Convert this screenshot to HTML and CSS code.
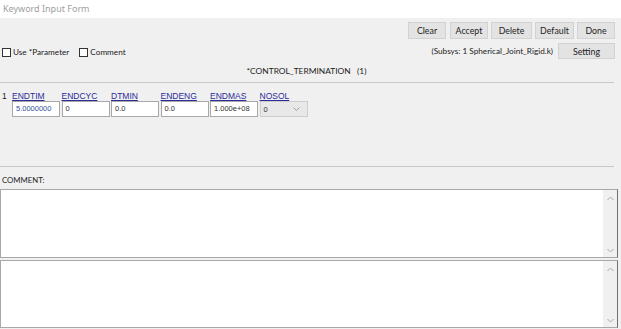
FILE: index.html
```html
<!DOCTYPE html>
<html>
<head>
<meta charset="utf-8">
<link rel="stylesheet" href="styles.css">
</head>
<body>
<div class="window">
  <div class="titlebar">Keyword Input Form</div>
  <div class="toolbar">
    <button class="btn btn-clear">Clear</button>
    <button class="btn btn-accept">Accept</button>
    <button class="btn btn-delete">Delete</button>
    <button class="btn btn-default">Default</button>
    <button class="btn btn-done">Done</button>
  </div>
  <div class="row2">
    <div class="checks">
      <label class="check"><span class="box"></span>Use *Parameter</label>
      <label class="check"><span class="box"></span>Comment</label>
    </div>
    <div class="subsys">
      <span class="subsys-text">(Subsys: 1 Spherical_Joint_Rigid.k)</span>
      <button class="btn btn-setting">Setting</button>
    </div>
  </div>
  <div class="heading">*CONTROL_TERMINATION &nbsp;&nbsp;(1)</div>
  <div class="sep"></div>
  <div class="fields">
    <div class="rownum">1</div>
    <div class="grid">
      <a class="lbl">ENDTIM</a>
      <a class="lbl">ENDCYC</a>
      <a class="lbl">DTMIN</a>
      <a class="lbl">ENDENG</a>
      <a class="lbl">ENDMAS</a>
      <a class="lbl">NOSOL</a>
      <div class="inp inp-blue">5.0000000</div>
      <div class="inp">0</div>
      <div class="inp">0.0</div>
      <div class="inp">0.0</div>
      <div class="inp">1.000e+08</div>
      <div class="sel"><span>0</span><svg width="7" height="4" viewBox="0 0 7 4"><path d="M0.5 0.5 L3.5 3.5 L6.5 0.5" fill="none" stroke="#9a9a9a" stroke-width="0.9"/></svg></div>
    </div>
  </div>
  <div class="sep"></div>
  <div class="comment-label">COMMENT:</div>
  <div class="memo memo-1">
    <div class="memo-body"></div>
    <div class="vscroll">
      <svg width="7" height="5" viewBox="0 0 7 5"><path d="M0.5 4 L3.5 1 L6.5 4" fill="none" stroke="#a8a8a8" stroke-width="1"/></svg>
      <svg width="7" height="5" viewBox="0 0 7 5"><path d="M0.5 1 L3.5 4 L6.5 1" fill="none" stroke="#a8a8a8" stroke-width="1"/></svg>
    </div>
  </div>
  <div class="memo memo-2">
    <div class="memo-body"></div>
    <div class="vscroll">
      <svg width="7" height="5" viewBox="0 0 7 5"><path d="M0.5 4 L3.5 1 L6.5 4" fill="none" stroke="#a8a8a8" stroke-width="1"/></svg>
      <svg width="7" height="5" viewBox="0 0 7 5"><path d="M0.5 1 L3.5 4 L6.5 1" fill="none" stroke="#a8a8a8" stroke-width="1"/></svg>
    </div>
  </div>
</div>
</body>
</html>
```
FILE: styles.css
```css
* { box-sizing: border-box; }
html, body { margin: 0; padding: 0; }
body {
  width: 621px;
  height: 329px;
  overflow: hidden;
  background: #f0f0f0;
  font-family: Lato, "Noto Sans", sans-serif;
  font-size: 9px;
  color: #222;
}
.window { width: 621px; height: 329px; }
.titlebar {
  height: 18px;
  background: #ffffff;
  color: #a0a0a0;
  padding-left: 3px;
  line-height: 18px;
  font-family: "Noto Sans", sans-serif;
  font-size: 9px;
}
.toolbar {
  display: flex;
  justify-content: flex-end;
  gap: 3px;
  padding: 4px 6px 0 0;
}
.btn {
  font-family: inherit;
  font-size: 8.8px;
  color: #222;
  height: 17px;
  padding: 0;
  margin: 0;
  background: #e3e3e3;
  border: 1px solid #d2d2d2;
  line-height: 15px;
}
.btn-clear { width: 38px; }
.btn-accept { width: 38px; margin-left: 1px; }
.btn-delete { width: 41px; }
.btn-default { width: 39px; }
.btn-done { width: 38px; }
.btn-setting { width: 57px; height: 16px; }
.row2 {
  display: flex;
  justify-content: space-between;
  align-items: center;
  margin-top: 4px;
  height: 16px;
  padding-right: 6px;
  font-size: 8.2px;
}
.checks { display: flex; align-items: center; padding-left: 2px; padding-top: 2px; }
.check { display: flex; align-items: center; margin-right: 10px; }
.box {
  width: 9px; height: 9px;
  border: 1px solid #333;
  background: #fff;
  margin-right: 2px;
}
.subsys { display: flex; align-items: center; }
.subsys-text { margin-right: 5px; }
.heading {
  height: 23px;
  line-height: 24px;
  text-align: center;
  font-size: 8.4px;
  padding-right: 8px;
}
.sep {
  height: 1px;
  background: #c8c8c8;
  margin-right: 7px;
}
.fields {
  display: flex;
  height: 83px;
  padding-top: 8px;
}
.rownum {
  width: 12px;
  padding-left: 2px;
  font-family: "Liberation Sans", Arial, sans-serif;
  font-size: 8.5px;
  line-height: 10px;
}
.grid {
  display: grid;
  grid-template-columns: repeat(6, 48px);
  column-gap: 1.5px;
  grid-template-rows: 10px 16px;
  row-gap: 0;
  align-content: start;
}
.lbl {
  font-family: "Liberation Sans", Arial, sans-serif;
  font-size: 8.5px;
  line-height: 10px;
  color: #2b2b9a;
  text-decoration: underline;
}
.inp {
  height: 16px;
  background: #fff;
  border: 1px solid #a8a8a8;
  font-family: "Liberation Sans", Arial, sans-serif;
  font-size: 7.5px;
  line-height: 14px;
  padding-left: 3px;
  color: #333;
}
.inp-blue { color: #34539a; }
.sel {
  height: 16px;
  background: #e8e8e8;
  border: 1px solid #cdcdcd;
  display: flex;
  justify-content: space-between;
  align-items: center;
  padding: 0 7px 0 3px;
  font-family: "Liberation Sans", Arial, sans-serif;
  font-size: 7.5px;
  color: #333;
}
.comment-label {
  height: 22px;
  padding: 4px 0 0 2px;
  line-height: 18px;
  font-size: 7.8px;
}
.memo {
  display: flex;
  width: 618px;
  height: 69px;
  background: #fff;
  border: 1px solid #a8a8a8;
  border-right-color: #707070;
}
.memo-2 { margin-top: 2px; height: 68px; }
.memo-body { flex: 1; }
.vscroll {
  width: 14px;
  background: #f0f0f0;
  display: flex;
  flex-direction: column;
  justify-content: space-between;
  align-items: center;
  padding: 6px 0 4px;
}
```
